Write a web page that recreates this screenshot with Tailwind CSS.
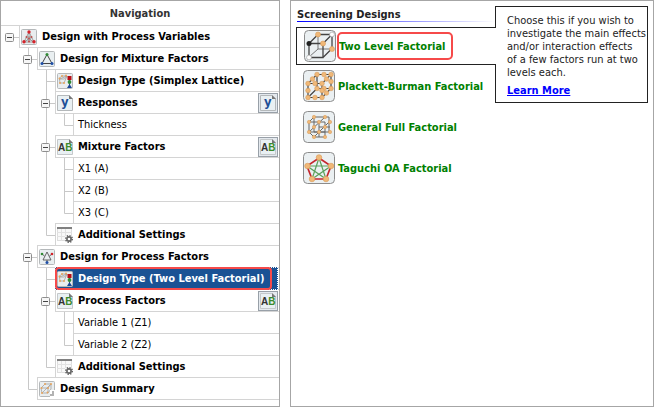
<!DOCTYPE html>
<html lang="en">
<head>
    <meta charset="UTF-8">
    <meta name="viewport" content="width=device-width, initial-scale=1.0">
    <title>Design Navigation</title>
    <script src="https://cdn.jsdelivr.net/npm/@tailwindcss/browser@4"></script>
</head>
<body class="bg-white font-['DejaVu_Sans_Condensed','Noto_Sans',sans-serif] text-[11px] text-black">

    <!-- Shared icons -->
    <svg class="hidden">
        <!-- tree connectors, 18x22 -->
        <symbol id="t-blank" viewBox="0 0 18 22"></symbol>
        <symbol id="t-line" viewBox="0 0 18 22"><path d="M9.5 0V22" stroke="#c8c8c8"/></symbol>
        <symbol id="t-tee" viewBox="0 0 18 22"><path d="M9.5 0V22M9.5 11.5H18" stroke="#c8c8c8" fill="none"/></symbol>
        <symbol id="t-elbow" viewBox="0 0 18 22"><path d="M9.5 0V11.5H18" stroke="#c8c8c8" fill="none"/></symbol>
        <symbol id="t-box" viewBox="0 0 18 22">
            <path d="M13 11.5H18" stroke="#c8c8c8"/>
            <rect x="4.5" y="7.5" width="8" height="8" rx="1" fill="#f6f6f6" stroke="#8e8e8e"/>
            <path d="M6 11.5H11" stroke="#444"/>
        </symbol>

        <symbol id="i-root" viewBox="0 0 16 16">
            <rect x=".5" y=".5" width="15" height="15" rx="1" fill="#e9edef" stroke="#b4b8ba"/>
            <path d="M8 3L3 13H13ZM8 3V10L3 13M8 10L13 13M5.500 8H10.500L8 13Z" fill="none" stroke="#888" stroke-width=".8"/>
            <g fill="#d3232b"><circle cx="8" cy="3" r="1.700"/><circle cx="3" cy="12.700" r="1.700"/><circle cx="13" cy="12.700" r="1.700"/></g>
            <g fill="#c0504d"><circle cx="5.500" cy="8" r="1"/><circle cx="10.500" cy="8" r="1"/><circle cx="8" cy="12.500" r="1"/><circle cx="8" cy="9.500" r="1"/></g>
        </symbol>
        <symbol id="i-mixture" viewBox="0 0 16 16">
            <rect x=".5" y=".5" width="15" height="15" rx="1" fill="#e9eff1" stroke="#b4b8ba"/>
            <path d="M8 3.500L3 12.500H13Z" fill="none" stroke="#444"/>
            <circle cx="8" cy="3.500" r="1.500" fill="#2f8a35"/>
            <circle cx="3" cy="12.500" r="1.500" fill="#1f4fa8"/><circle cx="13" cy="12.500" r="1.500" fill="#1f4fa8"/>
        </symbol>
        <symbol id="i-type" viewBox="0 0 16 16">
            <rect x=".5" y=".5" width="15" height="15" rx="1" fill="#e9edef" stroke="#b4b8ba"/>
            <path d="M2 5.500L5 3H10L7.500 6H2.500L3 10H7L10 3M2.500 6L10 3" fill="none" stroke="#999" stroke-width=".7"/>
            <g fill="#e9a45c"><circle cx="2.500" cy="5.500" r="1"/><circle cx="5" cy="3" r="1"/><circle cx="3" cy="10" r="1"/><circle cx="7" cy="10" r="1"/><circle cx="9" cy="2.500" r="1"/></g>
            <path d="M12.500 4V13" stroke="#555"/>
            <rect x="10.500" y="3" width="4" height="4" fill="#b80d15"/>
            <circle cx="12.500" cy="9" r="1.900" fill="#2f8a35"/>
            <path d="M12.500 11L15 15H10Z" fill="#1b4796"/>
        </symbol>
        <symbol id="i-y" viewBox="0 0 16 16">
            <path d="M.5 .5H12L15.500 4V15.500H.5Z" fill="#e9f0f3" stroke="#b4b8ba"/>
            <path d="M12 0V4H16Z" fill="#777"/>
            <text x="4" y="11" font-family="DejaVu Sans Condensed, sans-serif" font-weight="bold" font-size="13" fill="#1d4f96">y</text>
        </symbol>
        <symbol id="i-ab" viewBox="0 0 16 16">
            <path d="M.5 .5H12L15.500 4V15.500H.5Z" fill="#e9f0f3" stroke="#c4c8ca"/>
            <path d="M12 0V4H16Z" fill="#777"/>
            <text x="1" y="12" font-family="Liberation Sans, sans-serif" font-weight="bold" font-size="10" fill="#333">A<tspan fill="#3b8a2b">B</tspan></text>
        </symbol>
        <symbol id="i-settings" viewBox="0 0 16 16">
            <rect x=".5" y=".5" width="14" height="13" fill="#f9f9f9" stroke="#ddd"/>
            <path d="M0 1H15" stroke="#808080" stroke-width="2"/>
            <path d="M0 5.500H15M0 9.500H8M4.500 2V14M8.500 2V9" stroke="#e2e2e2"/>
            <circle cx="12" cy="12" r="3.300" fill="none" stroke="#666" stroke-width="1.500" stroke-dasharray="1.300 1.290"/>
            <circle cx="12" cy="12" r="2.100" fill="#fff" stroke="#666" stroke-width="1.600"/>
        </symbol>
        <symbol id="i-process" viewBox="0 0 16 16">
            <rect x=".5" y=".5" width="15" height="15" rx="1" fill="#e9eff1" stroke="#b4b8ba"/>
            <path d="M8 3L4 11H12ZM3 5L5.500 7M13 5L10.500 7M8 11V14" fill="none" stroke="#555" stroke-width=".9"/>
            <circle cx="3" cy="5" r="1.300" fill="#2f8a35"/><circle cx="13" cy="5" r="1.300" fill="#d3232b"/><circle cx="8" cy="13.500" r="1.500" fill="#1f4fa8"/>
        </symbol>
        <symbol id="i-summary" viewBox="0 0 16 16">
            <rect x=".5" y=".5" width="15" height="15" rx="1" fill="#e9edef" stroke="#b4b8ba"/>
            <path d="M2 7L6 3H12L9 7ZM3 12L2 7M3 12H9V7M12 3V8L9 12M3 12L12 3" fill="none" stroke="#999" stroke-width=".7"/>
            <g fill="#e9a45c"><circle cx="2.500" cy="7" r="1"/><circle cx="6" cy="3" r="1"/><circle cx="12" cy="3" r="1"/><circle cx="3" cy="12" r="1"/><circle cx="8.500" cy="11.500" r="1"/><circle cx="9" cy="7" r="1"/></g>
            <rect x="11" y="9" width="5" height="7" fill="#fff"/>
            <path d="M12 15V13M14 15V10" stroke="#999" stroke-width="1.500"/>
        </symbol>
    </svg>

    <div class="flex min-h-screen gap-[10px]">
        <!-- Navigation tree -->
        <nav class="w-[280px] shrink-0 border border-[#a6a6a6]">
            <h1 class="flex h-[25px] items-center justify-center border-b border-[#d4d4d4] pt-[2px] font-bold text-[#333]">Navigation</h1>
            <ul id="tree"></ul>
        </nav>

        <!-- Design list -->
        <main class="flex min-w-0 flex-1 items-start border border-[#a6a6a6] px-[5px]">
            <div class="flex-1 pt-[7px]">
                <h2 class="pl-px font-bold leading-[13px] text-[#222]">Screening Designs</h2>
                <div class="ml-px h-px bg-[linear-gradient(90deg,#0000ff,#ffffff)]"></div>
                <div class="relative z-10 -mr-px mt-[5px] flex h-[38px] items-center border-y border-l border-[#222] bg-white pl-[7px]">
                    <svg class="size-8 shrink-0" viewBox="0 0 32 32">
                        <rect x=".5" y=".5" width="31" height="31" rx="4" fill="#ebf0f2" stroke="#8c8c8c"/>
                        <path d="M14 5V19H28M14 19L5 27" fill="none" stroke="#777"/>
                        <path d="M5 13.500H19V27.500H5ZM14 4.500H28V18.500M5 13.500L14 4.500M19 13.500L28 4.500M19 27.500L28 18.500" fill="none" stroke="#444" stroke-width="1.300"/>
                        <g fill="#f0b878" stroke="#d99a58" stroke-width=".6"><circle cx="14" cy="4.500" r="2.500"/><circle cx="19" cy="13.500" r="2.500"/><circle cx="28" cy="19" r="2.500"/></g>
                        <circle cx="5" cy="13.500" r="2.500" fill="#222"/>
                        <g fill="#fff" stroke="#999" stroke-width=".6"><circle cx="28" cy="4.500" r="2.400"/><circle cx="5" cy="27.500" r="2.400"/></g>
                    </svg>
                    <button class="ml-px flex h-7 items-center whitespace-nowrap rounded-[5px] border-2 border-[#f64a4a] pr-[6px] pt-[2px] font-bold text-[#008000]">Two Level Factorial</button>
                </div>
                <div class="flex flex-col gap-[9px] pl-[7px] pt-[5px] font-bold text-[#008000]">
                    <button class="flex items-center gap-[3px] whitespace-nowrap">
                        <svg class="size-8 shrink-0" viewBox="0 0 32 32">
                            <rect x=".5" y=".5" width="31" height="31" rx="4" fill="#ebf0f2" stroke="#8c8c8c"/>
                            <path d="M5 13.500H19V27.500H5ZM14 4.500H28V18.500L19 27.500M5 13.500L14 4.500V18.500H28M19 13.500L28 4.500M5 27.500L14 18.500" fill="none" stroke="#444" stroke-width="1.200"/>
                            <g fill="#f0b878" stroke="#d99a58" stroke-width=".6"><circle cx="14" cy="4.500" r="2.300"/><circle cx="21" cy="4.500" r="2.300"/><circle cx="28" cy="4.500" r="2.300"/><circle cx="9.500" cy="9" r="2.300"/><circle cx="23.500" cy="9" r="2.300"/><circle cx="28" cy="11.500" r="2.300"/><circle cx="5" cy="13.500" r="2.300"/><circle cx="12" cy="13.500" r="2.300"/><circle cx="19" cy="13.500" r="2.300"/><circle cx="28" cy="18.500" r="2.300"/><circle cx="14" cy="18.500" r="2.300"/><circle cx="21" cy="18.500" r="2.300"/><circle cx="5" cy="20.500" r="2.300"/><circle cx="19" cy="20.500" r="2.300"/><circle cx="23.500" cy="23" r="2.300"/><circle cx="5" cy="27.500" r="2.300"/><circle cx="12" cy="27.500" r="2.300"/><circle cx="19" cy="27.500" r="2.300"/></g>
                        </svg>
                        <span class="pt-[2px]">Plackett-Burman Factorial</span>
                    </button>
                    <button class="flex items-center gap-[3px] whitespace-nowrap">
                        <svg class="size-8 shrink-0" viewBox="0 0 32 32">
                            <rect x=".5" y=".5" width="31" height="31" rx="4" fill="#ebf0f2" stroke="#8c8c8c"/>
                            <path d="M6 11H22V26H11M11 6H26V21H11ZM6 11V21L11 26M6 11L11 6M16 16H27M6 21H22M16 11V26M6 21L22 6M11 26L26 11" fill="none" stroke="#666"/>
                            <g fill="#f0b878" stroke="#d99a58" stroke-width=".5"><circle cx="11" cy="6" r="1.700"/><circle cx="22" cy="6" r="1.700"/><circle cx="6" cy="11" r="1.700"/><circle cx="16" cy="11" r="1.700"/><circle cx="27" cy="11" r="1.700"/><circle cx="11" cy="16" r="1.700"/><circle cx="22" cy="16" r="1.700"/><circle cx="6" cy="21" r="1.700"/><circle cx="16" cy="21" r="1.700"/><circle cx="27" cy="21" r="1.700"/><circle cx="11" cy="26" r="1.700"/><circle cx="22" cy="26" r="1.700"/></g>
                        </svg>
                        <span class="pt-[2px]">General Full Factorial</span>
                    </button>
                    <button class="flex items-center gap-[3px] whitespace-nowrap">
                        <svg class="size-8 shrink-0" viewBox="0 0 32 32">
                            <rect x=".5" y=".5" width="31" height="31" rx="4" fill="#ebf0f2" stroke="#8c8c8c"/>
                            <path d="M16 6L28 14L23 27H9L4 14Z" fill="none" stroke="#c4262e" stroke-width="1.700"/>
                            <path d="M16 6L23 27L4 14H28L9 27Z" fill="none" stroke="#5aa05a" stroke-width="1.200"/>
                            <g fill="#f0b878" stroke="#d99a58" stroke-width=".6"><circle cx="16" cy="5.500" r="2.800"/><circle cx="28" cy="14" r="2.800"/><circle cx="23" cy="27" r="2.800"/><circle cx="9" cy="27" r="2.800"/><circle cx="4.500" cy="14" r="2.800"/></g>
                        </svg>
                        <span class="pt-[2px]">Taguchi OA Factorial</span>
                    </button>
                </div>
            </div>

            <aside class="mt-[5px] h-[97px] w-[153px] shrink-0 border border-[#222] pl-[11px] pt-[7px] leading-[13px] text-[#222]">
                <p class="whitespace-nowrap">Choose this if you wish to<br>investigate the main effects<br>and/or interaction effects<br>of a few factors run at two<br>levels each.</p>
                <a href="#" class="mt-[5px] block font-bold text-[#0000ff] underline">Learn More</a>
            </aside>
        </main>
    </div>

    <script>
        // slots: one letter per 18px tree column
        // b blank, l line, t tee, e elbow, x expander, X expander on a running line
        const rows = [
            { slots: 'x', icon: 'i-root', text: 'Design with Process Variables' },
            { slots: 'bX', icon: 'i-mixture', text: 'Design for Mixture Factors' },
            { slots: 'blt', icon: 'i-type', text: 'Design Type (Simplex Lattice)' },
            { slots: 'blX', icon: 'i-y', text: 'Responses', action: 'i-y' },
            { slots: 'blle', text: 'Thickness' },
            { slots: 'blX', icon: 'i-ab', text: 'Mixture Factors', action: 'i-ab' },
            { slots: 'bllt', text: 'X1 (A)' },
            { slots: 'bllt', text: 'X2 (B)' },
            { slots: 'blle', text: 'X3 (C)' },
            { slots: 'ble', icon: 'i-settings', text: 'Additional Settings' },
            { slots: 'bX', icon: 'i-process', text: 'Design for Process Factors' },
            { slots: 'blt', icon: 'i-type', text: 'Design Type (Two Level Factorial)', selected: true },
            { slots: 'blX', icon: 'i-ab', text: 'Process Factors', action: 'i-ab' },
            { slots: 'bllt', text: 'Variable 1 (Z1)' },
            { slots: 'blle', text: 'Variable 2 (Z2)' },
            { slots: 'ble', icon: 'i-settings', text: 'Additional Settings' },
            { slots: 'be', icon: 'i-summary', text: 'Design Summary' }
        ];

        const names = { b: 't-blank', l: 't-line', t: 't-tee', e: 't-elbow' };

        function slot(s, label) {
            if (s === 'x' || s === 'X') {
                const line = s === 'X' ? '<use href="#t-line"/>' : '';
                return `<button class="shrink-0" aria-label="Collapse ${label}"><svg class="h-[22px] w-[18px]">${line}<use href="#t-box"/></svg></button>`;
            }
            return `<svg class="h-[22px] w-[18px] shrink-0"><use href="#${names[s]}"/></svg>`;
        }

        function row(r) {
            const icon = r.icon ? `<svg class="size-4 shrink-0"><use href="#${r.icon}"/></svg>` : '';
            const label = r.icon
                ? `<span class="ml-[5px] pt-[2px] font-bold">${r.text}</span>`
                : `<span class="ml-[3px] pt-[2px]">${r.text}</span>`;
            const action = r.action
                ? `<button class="ml-auto mr-px flex size-5 items-center justify-center border border-[#98a0a8] bg-[#e4e9ee]" aria-label="Edit ${r.text}"><svg class="size-4"><use href="#${r.action}"/></svg></button>`
                : '';
            const mark = r.selected ? '<span class="absolute -left-px -top-px h-[23px] w-[217px] rounded-[4px] border-2 border-[#f64a4a]"></span>' : '';
            const cell = r.selected
                ? 'relative -mt-px mr-px flex h-[23px] min-w-0 flex-1 items-center whitespace-nowrap border border-dotted border-white bg-[#1a5294] pl-px text-white'
                : '-mt-px flex h-[23px] min-w-0 flex-1 items-center whitespace-nowrap border-y border-l border-[#d4d4d4] pl-px';
            return `<li class="flex h-[22px]">${[...r.slots].map(s => slot(s, r.text)).join('')}<div class="${cell}">${icon}${label}${action}${mark}</div></li>`;
        }

        document.getElementById('tree').innerHTML = rows.map(row).join('');
    </script>
</body>
</html>
